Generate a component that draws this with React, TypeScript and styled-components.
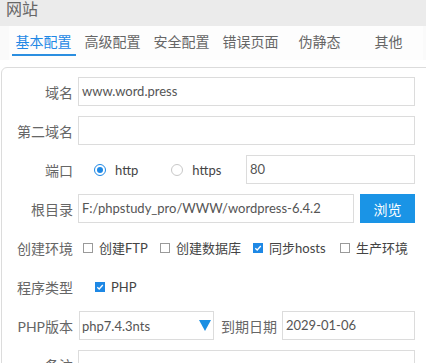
import React from 'react';
import styled, { createGlobalStyle } from 'styled-components';

const GlobalStyle = createGlobalStyle`
  html, body {
    margin: 0;
    padding: 0;
    background: #ffffff;
    overflow: hidden;
  }
  body {
    font-family: Lato, "Noto Sans CJK SC", sans-serif;
    color: #555;
  }
`;

const tabs = ['基本配置', '高级配置', '安全配置', '错误页面', '伪静态', '其他'];

const envOptions = [
  { label: '创建FTP', checked: false, width: 77 },
  { label: '创建数据库', checked: false, width: 93 },
  { label: '同步hosts', checked: true, width: 87 },
  { label: '生产环境', checked: false, width: 0 },
];

const CheckIcon = () => (
  <svg width="8" height="8" viewBox="0 0 8 8">
    <path d="M1.3 4.2 L3.2 6 L6.8 2" fill="none" stroke="#fff" strokeWidth="1.3" />
  </svg>
);

const Checkbox = ({ checked, label, width = 0 }: { checked: boolean; label: string; width?: number }) => (
  <CheckItem width={width}>
    <Box checked={checked}>{checked && <CheckIcon />}</Box>
    <span>{label}</span>
  </CheckItem>
);

const App = () => {
  return (
    <Wrap>
      <GlobalStyle />
      <TitleBar>网站</TitleBar>
      <TabBar>
        {tabs.map((t, i) => (
          <Tab key={t} active={i === 0}>
            <span>{t}</span>
          </Tab>
        ))}
      </TabBar>
      <Panel>
        <Row>
          <Label>域名</Label>
          <Input>www.word.press</Input>
        </Row>
        <Row>
          <Label>第二域名</Label>
          <Input />
        </Row>
        <Row>
          <Label>端口</Label>
          <RadioGroup>
            <RadioItem>
              <Radio checked />
              <span>http</span>
            </RadioItem>
            <RadioItem>
              <Radio checked={false} />
              <span>https</span>
            </RadioItem>
          </RadioGroup>
          <Input>80</Input>
        </Row>
        <Row>
          <Label>根目录</Label>
          <Input>F:/phpstudy_pro/WWW/wordpress-6.4.2</Input>
          <BrowseButton>浏览</BrowseButton>
        </Row>
        <Row>
          <Label>创建环境</Label>
          <CheckGroup indent={5}>
            {envOptions.map((o) => (
              <Checkbox key={o.label} checked={o.checked} label={o.label} width={o.width} />
            ))}
          </CheckGroup>
        </Row>
        <Row>
          <Label>程序类型</Label>
          <CheckGroup indent={17}>
            <Checkbox checked label="PHP" />
          </CheckGroup>
        </Row>
        <Row>
          <Label>PHP版本</Label>
          <Select>
            <span>php7.4.3nts</span>
            <Arrow />
          </Select>
          <InlineLabel>到期日期</InlineLabel>
          <Input>2029-01-06</Input>
        </Row>
        <Row>
          <Label>备注</Label>
          <Input />
        </Row>
      </Panel>
    </Wrap>
  );
};

const Wrap = styled.div`
  width: 426px;
  height: 363px;
  overflow: hidden;
`;

const TitleBar = styled.div`
  height: 26px;
  background: #ebebeb;
  color: #666;
  font-size: 16px;
  line-height: 18px;
  padding-left: 6px;
  box-sizing: border-box;
`;

const TabBar = styled.div`
  height: 34px;
  background: #fafafa;
  display: flex;
  padding-left: 9px;
`;

const Tab = styled.div<{ active: boolean }>`
  width: 69px;
  display: flex;
  justify-content: center;
  background: #fdfdfd;
  span {
    font-size: 14px;
    line-height: 20px;
    padding: 6px 4px 0;
    height: 22px;
    color: ${(p) => (p.active ? '#1e88e5' : '#666')};
    border-bottom: 2px solid ${(p) => (p.active ? '#2a8ee0' : 'transparent')};
  }
`;

const Panel = styled.div`
  margin: 7px 0 0 1px;
  width: 460px;
  height: 320px;
  border: 1px solid #dcdcdc;
  border-radius: 6px;
  box-sizing: border-box;
  padding: 9px 0 0 0;
  display: flex;
  flex-direction: column;
  gap: 10px;
`;

const Row = styled.div`
  display: flex;
  align-items: center;
  height: 29px;
  width: 413px;
  flex-shrink: 0;
`;

const Label = styled.div`
  width: 71px;
  margin-right: 5px;
  text-align: right;
  font-size: 14px;
  color: #666;
  flex-shrink: 0;
`;

const InlineLabel = styled.div`
  font-size: 14px;
  color: #666;
  margin: 0 5px 0 7px;
  flex-shrink: 0;
`;

const Input = styled.div`
  flex: 1;
  height: 29px;
  border: 1px solid #dcdcdc;
  box-sizing: border-box;
  background: #fff;
  font-size: 13px;
  color: #555;
  line-height: 27px;
  padding-left: 3px;
  white-space: nowrap;
  overflow: hidden;
`;

const RadioGroup = styled.div`
  display: flex;
  align-items: center;
  padding-left: 16px;
  gap: 33px;
  width: 152px;
  flex-shrink: 0;
`;

const RadioItem = styled.div`
  display: flex;
  align-items: center;
  gap: 9px;
  font-size: 13px;
  color: #444;
`;

const Radio = styled.span<{ checked: boolean }>`
  width: 12px;
  height: 12px;
  border-radius: 50%;
  box-sizing: border-box;
  border: 1px solid ${(p) => (p.checked ? '#1e88e5' : '#c8c8c8')};
  display: flex;
  align-items: center;
  justify-content: center;
  &::after {
    content: '';
    width: 6px;
    height: 6px;
    border-radius: 50%;
    background: ${(p) => (p.checked ? '#1e88e5' : 'transparent')};
  }
`;

const BrowseButton = styled.div`
  width: 55px;
  height: 29px;
  margin-left: 6px;
  background: #1a94e6;
  color: #fff;
  font-size: 14px;
  display: flex;
  align-items: center;
  justify-content: center;
  flex-shrink: 0;
`;

const CheckGroup = styled.div<{ indent: number }>`
  display: flex;
  align-items: center;
  padding-left: ${(p) => p.indent}px;
`;

const CheckItem = styled.div<{ width: number }>`
  display: flex;
  align-items: center;
  gap: 6px;
  font-size: 13px;
  color: #444;
  white-space: nowrap;
  width: ${(p) => (p.width ? `${p.width}px` : 'auto')};
  flex-shrink: 0;
`;

const Box = styled.span<{ checked: boolean }>`
  width: 10px;
  height: 10px;
  box-sizing: border-box;
  border: 1px solid ${(p) => (p.checked ? '#1e88e5' : '#9a9a9a')};
  background: ${(p) => (p.checked ? '#1e88e5' : '#fff')};
  display: flex;
  align-items: center;
  justify-content: center;
  flex-shrink: 0;
`;

const Select = styled.div`
  width: 135px;
  height: 29px;
  margin-left: 1px;
  border: 1px solid #dcdcdc;
  box-sizing: border-box;
  display: flex;
  align-items: center;
  justify-content: space-between;
  padding: 0 2px 0 2px;
  font-size: 13px;
  color: #555;
  flex-shrink: 0;
`;

const Arrow = styled.span`
  width: 0;
  height: 0;
  border-left: 6px solid transparent;
  border-right: 6px solid transparent;
  border-top: 11px solid #1a8fe3;
`;

export default App;
